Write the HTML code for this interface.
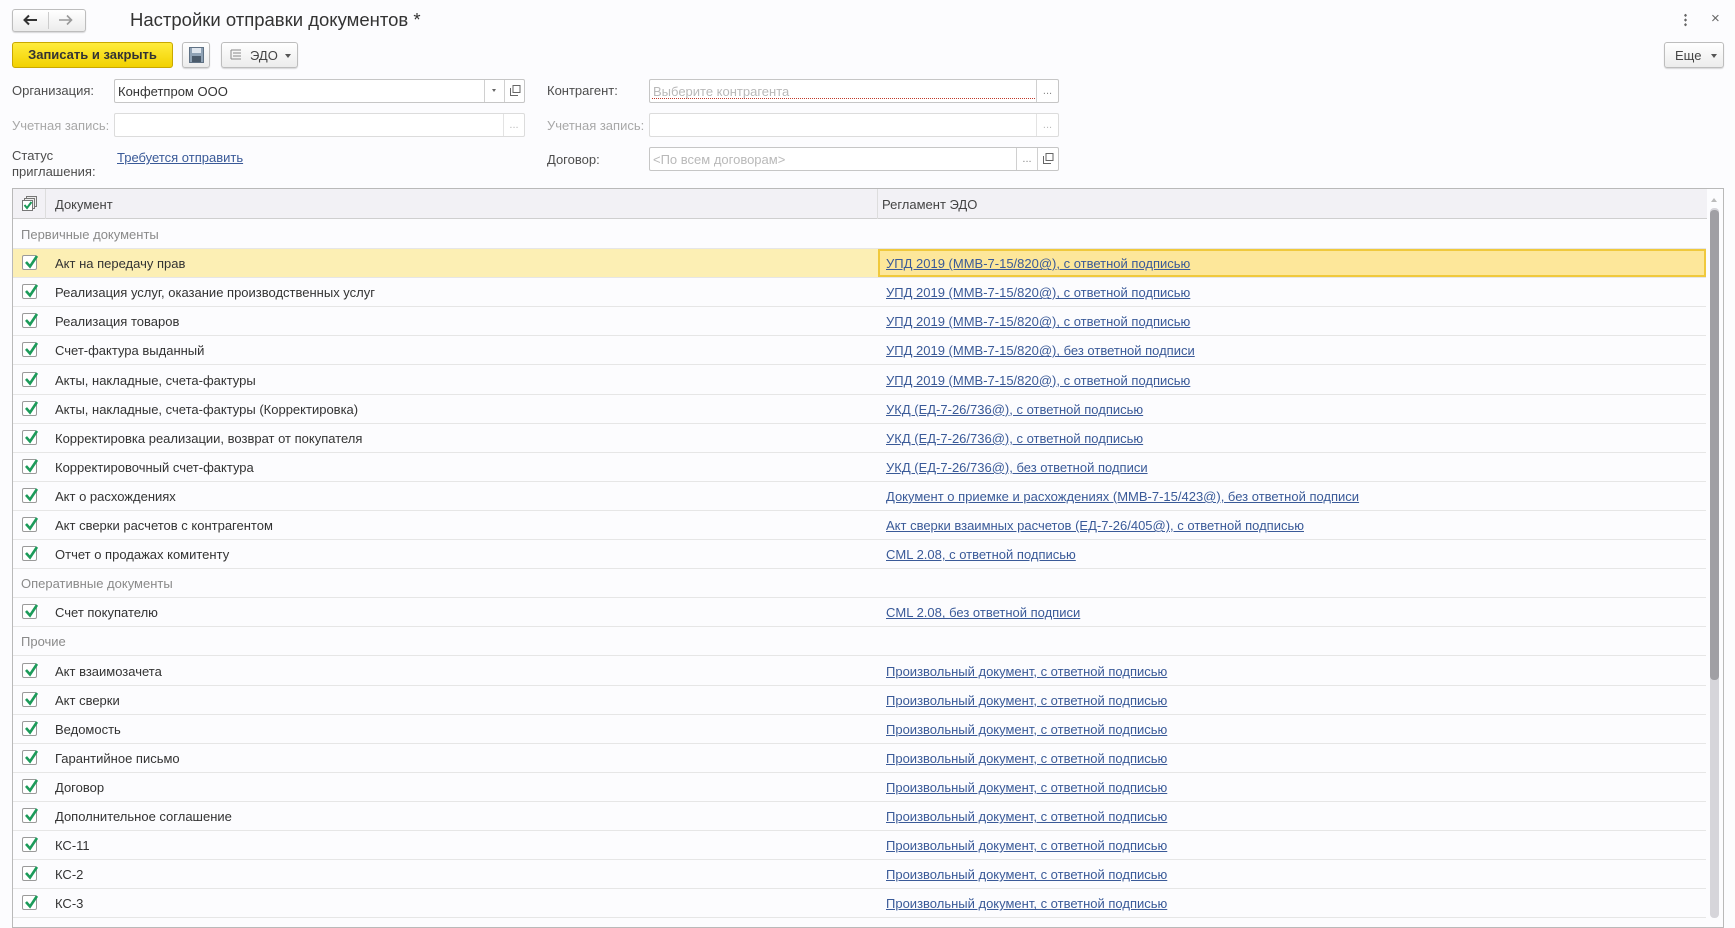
<!DOCTYPE html>
<html><head><meta charset="utf-8"><style>
*{box-sizing:border-box;margin:0;padding:0}
body{width:1735px;height:916px;overflow:hidden;background:#fcfcfe;font-family:"Liberation Sans",Arial,sans-serif;font-size:13px;color:#333;position:relative}
.a{position:absolute}
.btn{position:absolute;border:1px solid #bdbdbd;border-radius:3px;background:linear-gradient(#fff,#ececec);box-shadow:0 1px 1px rgba(0,0,0,.15)}
.inp{position:absolute;border:1px solid #c6c6c6;border-radius:2px;background:#fff}
.inp.dis{border-color:#dcdcdc}
.ib{position:absolute;top:0;bottom:0;border-left:1px solid #d0d0d0;color:#888;font-size:11px;text-align:center}
.lbl{position:absolute;color:#4d4d4d}
.gray{color:#a8a8a8}
.row{position:absolute;left:13px;width:1693px;height:29.1px;border-bottom:1px solid #e6e6e6}
.row .t{position:absolute;left:42px;top:7px;white-space:nowrap}
.row .g{position:absolute;left:8px;top:7px;color:#8a8a8a}
.row a{position:absolute;left:873px;top:7px;color:#3a5a98;text-decoration:underline;white-space:nowrap}
.cb{position:absolute;left:9px;top:6px;width:15px;height:15px;border:1px solid #9a9a9a;border-radius:2px;background:#fff}
.cb svg{position:absolute;left:0;top:-3px}
</style></head><body>
<div class="btn" style="left:12px;top:9px;width:74px;height:23px"></div>
<div class="a" style="left:48px;top:12px;width:1px;height:17px;background:#ccc"></div>
<svg class="a" style="left:22px;top:14px" width="16" height="12"><path d="M15 6H3M7 1.5L2.5 6 7 10.5" stroke="#333" stroke-width="2" fill="none"/></svg>
<svg class="a" style="left:58px;top:14px" width="16" height="12"><path d="M1 6h12M9 1.5L13.5 6 9 10.5" stroke="#999" stroke-width="1.6" fill="none"/></svg>
<div class="a" style="left:130px;top:9px;font-size:18.5px;color:#333">Настройки отправки документов *</div>
<div class="a" style="left:1684px;top:13px;width:3px;height:14px;background:radial-gradient(circle,#666 1.2px,transparent 1.4px) 0 0/3px 4.7px"></div>
<div class="a" style="left:1711px;top:10px;font-size:15px;color:#666">×</div>
<div class="a" style="left:12px;top:42px;width:161px;height:26px;border:1px solid #c9a800;border-radius:3px;background:linear-gradient(#ffec3d,#f2d100);font-weight:bold;font-size:13px;color:#333;text-align:center;line-height:24px">Записать и закрыть</div>
<div class="btn" style="left:182px;top:42px;width:28px;height:26px"></div>
<svg class="a" style="left:189px;top:47px" width="15" height="16"><rect x="0.5" y="0.5" width="14" height="15" fill="#8fa2b5" stroke="#5f7184"/><rect x="3" y="1" width="9" height="5" fill="#dfe6ee"/><rect x="3" y="9" width="9" height="6" fill="#4a5a6a"/></svg>
<div class="btn" style="left:221px;top:42px;width:77px;height:26px"></div>
<svg class="a" style="left:229px;top:48px" width="14" height="14"><path d="M2 2h10M4 5h8M4 8h8M2 11h10M2 2v9" stroke="#888" fill="none"/></svg>
<div class="a" style="left:250px;top:48px;color:#444">ЭДО</div>
<div class="a" style="left:285px;top:54px;border:3px solid transparent;border-top:4px solid #555"></div>
<div class="btn" style="left:1664px;top:42px;width:60px;height:26px"></div>
<div class="a" style="left:1675px;top:48px;color:#444">Еще</div>
<div class="a" style="left:1711px;top:54px;border:3px solid transparent;border-top:4px solid #555"></div>
<div class="lbl" style="left:12px;top:83px">Организация:</div>
<div class="inp" style="left:114px;top:79px;width:411px;height:24px"><span class="a" style="left:3px;top:4px;color:#333">Конфетпром ООО</span>
<div class="ib" style="left:369px;width:20px"><div class="a" style="left:7px;top:9px;border:2.5px solid transparent;border-top:3px solid #666"></div></div>
<div class="ib" style="left:389px;width:21px"><svg class="a" style="left:5px;top:5px" width="11" height="11"><path d="M3 .5h7v7H3zM.5 3v7.5H8" stroke="#666" fill="none"/></svg></div></div>
<div class="lbl" style="left:547px;top:83px">Контрагент:</div>
<div class="inp" style="left:649px;top:79px;width:410px;height:24px"><span class="a" style="left:3px;top:4px;color:#b9b9b9">Выберите контрагента</span>
<div class="a" style="left:2px;right:23px;bottom:3px;border-bottom:1px dotted #c0392b"></div>
<div class="ib" style="right:0;width:22px;line-height:22px">...</div></div>
<div class="lbl gray" style="left:12px;top:118px">Учетная запись:</div>
<div class="inp dis" style="left:114px;top:113px;width:411px;height:24px"><div class="ib" style="right:0;width:21px;line-height:22px;border-color:#e3e3e3;color:#bbb">...</div></div>
<div class="lbl gray" style="left:547px;top:118px">Учетная запись:</div>
<div class="inp dis" style="left:649px;top:113px;width:410px;height:24px"><div class="ib" style="right:0;width:22px;line-height:22px;border-color:#e3e3e3;color:#bbb">...</div></div>
<div class="lbl" style="left:12px;top:148px;line-height:16px">Статус<br>приглашения:</div>
<div class="a" style="left:117px;top:150px;color:#3a5a98;text-decoration:underline">Требуется отправить</div>
<div class="lbl" style="left:547px;top:152px">Договор:</div>
<div class="inp" style="left:649px;top:147px;width:410px;height:24px"><span class="a" style="left:3px;top:4px;color:#b9b9b9">&lt;По всем договорам&gt;</span>
<div class="ib" style="right:21px;width:21px;line-height:22px">...</div>
<div class="ib" style="right:0;width:21px"><svg class="a" style="left:5px;top:5px" width="11" height="11"><path d="M3 .5h7v7H3zM.5 3v7.5H8" stroke="#666" fill="none"/></svg></div></div>
<div class="a" style="left:12px;top:188px;width:1712px;height:740px;border:1px solid #b9b9b9;background:#fcfcfe"></div>
<div class="a" style="left:13px;top:189px;width:1694px;height:30px;background:#f2f1f5;border-bottom:1px solid #cfcfcf"></div>
<div class="a" style="left:45px;top:189px;width:1px;height:30px;background:#ddd"></div>
<div class="a" style="left:877px;top:189px;width:1px;height:30px;background:#ddd"></div>
<svg class="a" style="left:22px;top:196px" width="15" height="15"><rect x="4.5" y=".5" width="10" height="10" fill="#eee" stroke="#777"/><rect x="2.5" y="2.5" width="10" height="10" fill="#eee" stroke="#777"/><rect x=".5" y="4.5" width="10" height="10" fill="#fff" stroke="#777"/><path d="M2.5 9l2.5 3 4.5-6" stroke="#1c9b5a" stroke-width="2" fill="none"/></svg>
<div class="a" style="left:55px;top:197px;color:#444">Документ</div>
<div class="a" style="left:882px;top:197px;color:#444">Регламент ЭДО</div>
<div class="a" style="left:1711px;top:195px;border:3px solid transparent;border-bottom:4px solid #bbb"></div>
<div class="a" style="left:1710px;top:208px;width:9px;height:710px;background:#d6d5da;border-radius:4px"></div>
<div class="a" style="left:1710px;top:210px;width:9px;height:470px;background:#a09fa4;border-radius:4px"></div>
<div id="rows"></div>
<script>
const S='Произвольный документ, с ответной подписью',U='УПД 2019 (ММВ-7-15/820@), с ответной подписью',K='УКД (ЕД-7-26/736@), с ответной подписью';
const R=[['g','Первичные документы'],['Акт на передачу прав',U],['Реализация услуг, оказание производственных услуг',U],['Реализация товаров',U],['Счет-фактура выданный','УПД 2019 (ММВ-7-15/820@), без ответной подписи'],['Акты, накладные, счета-фактуры',U],['Акты, накладные, счета-фактуры (Корректировка)',K],['Корректировка реализации, возврат от покупателя',K],['Корректировочный счет-фактура','УКД (ЕД-7-26/736@), без ответной подписи'],['Акт о расхождениях','Документ о приемке и расхождениях (ММВ-7-15/423@), без ответной подписи'],['Акт сверки расчетов с контрагентом','Акт сверки взаимных расчетов (ЕД-7-26/405@), с ответной подписью'],['Отчет о продажах комитенту','CML 2.08, с ответной подписью'],['g','Оперативные документы'],['Счет покупателю','CML 2.08, без ответной подписи'],['g','Прочие'],['Акт взаимозачета',S],['Акт сверки',S],['Ведомость',S],['Гарантийное письмо',S],['Договор',S],['Дополнительное соглашение',S],['КС-11',S],['КС-2',S],['КС-3',S]];
let h='';const ck='<div class="cb"><svg width="16" height="18"><path d="M3 9l4 4.5L14 3" stroke="#1c9b5a" stroke-width="2.6" fill="none"/></svg></div>';
R.forEach((r,i)=>{const top=220+i*29.1;
if(r[0]=='g')h+=`<div class="row" style="top:${top}px"><span class="g">${r[1]}</span></div>`;
else{const hl=i==1;h+=`<div class="row" style="top:${top}px;${hl?'background:#fcefb4;':''}">${ck}<span class="t">${r[0]}</span>${hl?'<div style="position:absolute;left:865px;right:0;top:0;bottom:0;border:2px solid #f0c93c;background:#fde79a"></div>':''}<a>${r[1]}</a></div>`;}});
document.getElementById('rows').innerHTML=h;
</script>
</body></html>
